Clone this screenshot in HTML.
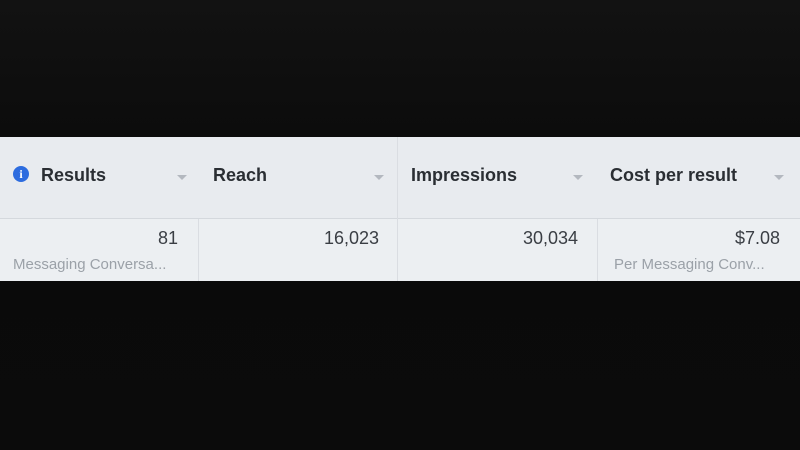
<!DOCTYPE html>
<html><head><meta charset="utf-8"><style>
html,body{margin:0;padding:0;width:800px;height:450px;overflow:hidden;background:#0b0b0b;font-family:"Liberation Sans",sans-serif;}
.bg{position:absolute;inset:0;background:linear-gradient(#121212,#0a0a0a 40%,#0b0b0b);}
.panel{position:absolute;left:0;top:137px;width:800px;height:144px;background:#eceff2;}
.hdr{position:absolute;left:0;top:0;width:800px;height:81px;background:#e8ebef;border-bottom:1px solid #d4d8dd;}
.h{position:absolute;top:28px;font-size:18px;font-weight:bold;color:#2a2e33;}
.arr{position:absolute;top:38px;width:0;height:0;border-left:5px solid transparent;border-right:5px solid transparent;border-top:5px solid #b3b8bf;}
.vl{position:absolute;width:1px;background:#dadde2;}
.n{position:absolute;top:91px;font-size:18px;color:#3a3e44;text-align:right;}
.s{position:absolute;top:119px;font-size:15px;color:#9ba1a8;}
.info{position:absolute;left:13px;top:29px;width:16px;height:16px;border-radius:50%;background:#2d6cdf;color:#fff;font:bold 12px "Liberation Serif",serif;text-align:center;line-height:16px;}
</style></head><body>
<div class="bg"></div>
<div class="panel">
 <div class="hdr"></div>
 <div class="info">i</div>
 <div class="h" style="left:41px">Results</div>
 <div class="arr" style="left:177px"></div>
 <div class="h" style="left:213px">Reach</div>
 <div class="arr" style="left:374px"></div>
 <div class="h" style="left:411px">Impressions</div>
 <div class="arr" style="left:573px"></div>
 <div class="h" style="left:610px">Cost per result</div>
 <div class="arr" style="left:774px"></div>
 <div class="vl" style="left:397px;top:0;height:144px"></div>
 <div class="vl" style="left:198px;top:82px;height:62px"></div>
 <div class="vl" style="left:597px;top:82px;height:62px"></div>
 <div class="n" style="right:622px">81</div>
 <div class="s" style="left:13px">Messaging Conversa...</div>
 <div class="n" style="right:421px">16,023</div>
 <div class="n" style="right:222px">30,034</div>
 <div class="n" style="right:20px">$7.08</div>
 <div class="s" style="left:614px">Per Messaging Conv...</div>
</div>
</body></html>
